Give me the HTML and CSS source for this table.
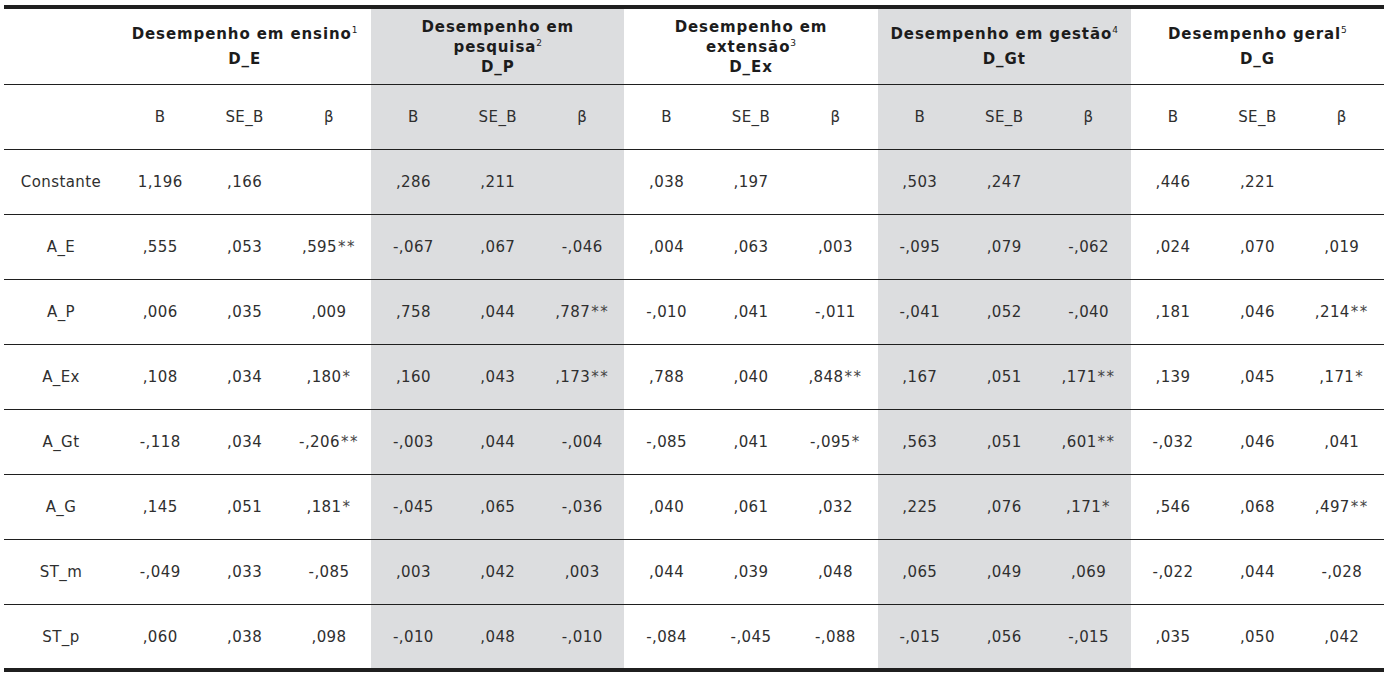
FILE: index.html
```html
<!DOCTYPE html>
<html lang="pt">
<head>
<meta charset="utf-8">
<title>Tabela de regressão</title>
<link rel="stylesheet" href="styles.css">
</head>
<body>
<table class="reg">
  <colgroup>
    <col class="c-label">
    <col span="15" class="c-num">
  </colgroup>
  <thead>
    <tr class="h1">
      <th></th>
      <th colspan="3" class="two">Desempenho em ensino<sup>1</sup><br>D_E</th>
      <th colspan="3" class="g three">Desempenho em<br>pesquisa<sup>2</sup><br>D_P</th>
      <th colspan="3" class="three">Desempenho em<br>extensão<sup>3</sup><br>D_Ex</th>
      <th colspan="3" class="g two">Desempenho em gestão<sup>4</sup><br>D_Gt</th>
      <th colspan="3" class="two">Desempenho geral<sup>5</sup><br>D_G</th>
    </tr>
    <tr class="h2">
      <th></th>
      <th>B</th><th>SE_B</th><th>β</th>
      <th class="g">B</th><th class="g">SE_B</th><th class="g">β</th>
      <th>B</th><th>SE_B</th><th>β</th>
      <th class="g">B</th><th class="g">SE_B</th><th class="g">β</th>
      <th>B</th><th>SE_B</th><th>β</th>
    </tr>
  </thead>
  <tbody>
    <tr>
      <td>Constante</td>
      <td>1,196</td><td>,166</td><td></td>
      <td class="g">,286</td><td class="g">,211</td><td class="g"></td>
      <td>,038</td><td>,197</td><td></td>
      <td class="g">,503</td><td class="g">,247</td><td class="g"></td>
      <td>,446</td><td>,221</td><td></td>
    </tr>
    <tr>
      <td>A_E</td>
      <td>,555</td><td>,053</td><td>,595<span class="st">**</span></td>
      <td class="g">-,067</td><td class="g">,067</td><td class="g">-,046</td>
      <td>,004</td><td>,063</td><td>,003</td>
      <td class="g">-,095</td><td class="g">,079</td><td class="g">-,062</td>
      <td>,024</td><td>,070</td><td>,019</td>
    </tr>
    <tr>
      <td>A_P</td>
      <td>,006</td><td>,035</td><td>,009</td>
      <td class="g">,758</td><td class="g">,044</td><td class="g">,787<span class="st">**</span></td>
      <td>-,010</td><td>,041</td><td>-,011</td>
      <td class="g">-,041</td><td class="g">,052</td><td class="g">-,040</td>
      <td>,181</td><td>,046</td><td>,214<span class="st">**</span></td>
    </tr>
    <tr>
      <td>A_Ex</td>
      <td>,108</td><td>,034</td><td>,180<span class="st">*</span></td>
      <td class="g">,160</td><td class="g">,043</td><td class="g">,173<span class="st">**</span></td>
      <td>,788</td><td>,040</td><td>,848<span class="st">**</span></td>
      <td class="g">,167</td><td class="g">,051</td><td class="g">,171<span class="st">**</span></td>
      <td>,139</td><td>,045</td><td>,171<span class="st">*</span></td>
    </tr>
    <tr>
      <td>A_Gt</td>
      <td>-,118</td><td>,034</td><td>-,206<span class="st">**</span></td>
      <td class="g">-,003</td><td class="g">,044</td><td class="g">-,004</td>
      <td>-,085</td><td>,041</td><td>-,095<span class="st">*</span></td>
      <td class="g">,563</td><td class="g">,051</td><td class="g">,601<span class="st">**</span></td>
      <td>-,032</td><td>,046</td><td>,041</td>
    </tr>
    <tr>
      <td>A_G</td>
      <td>,145</td><td>,051</td><td>,181<span class="st">*</span></td>
      <td class="g">-,045</td><td class="g">,065</td><td class="g">-,036</td>
      <td>,040</td><td>,061</td><td>,032</td>
      <td class="g">,225</td><td class="g">,076</td><td class="g">,171<span class="st">*</span></td>
      <td>,546</td><td>,068</td><td>,497<span class="st">**</span></td>
    </tr>
    <tr>
      <td>ST_m</td>
      <td>-,049</td><td>,033</td><td>-,085</td>
      <td class="g">,003</td><td class="g">,042</td><td class="g">,003</td>
      <td>,044</td><td>,039</td><td>,048</td>
      <td class="g">,065</td><td class="g">,049</td><td class="g">,069</td>
      <td>-,022</td><td>,044</td><td>-,028</td>
    </tr>
    <tr class="last">
      <td>ST_p</td>
      <td>,060</td><td>,038</td><td>,098</td>
      <td class="g">-,010</td><td class="g">,048</td><td class="g">-,010</td>
      <td>-,084</td><td>-,045</td><td>-,088</td>
      <td class="g">-,015</td><td class="g">,056</td><td class="g">-,015</td>
      <td>,035</td><td>,050</td><td>,042</td>
    </tr>
  </tbody>
</table>
</body>
</html>
```
FILE: styles.css
```css
html, body {
  margin: 0;
  padding: 0;
  background: #ffffff;
}
body {
  padding: 5px 4px 0 4px;
  font-family: "DejaVu Sans", Verdana, sans-serif;
  color: #2f2f2f;
}
.reg {
  width: 1380px;
  table-layout: fixed;
  border-collapse: separate;
  border-spacing: 0;
  border-top: 4px solid #1f1f1f;
  border-bottom: 4px solid #1f1f1f;
  font-size: 15px;
  letter-spacing: 0.4px;
}
.c-label { width: 114px; }
.c-num { width: 84.4px; }
.reg th, .reg td {
  padding: 0;
  text-align: center;
  vertical-align: middle;
  border-bottom: 1px solid #1f1f1f;
  font-weight: normal;
}
.reg tbody tr.last td { border-bottom: none; }
.reg .g { background: #dcdddf; }
.st {
  letter-spacing: 1.5px;
  color: #444;
  margin-left: 1px;
}
.h1 th {
  height: 75px;
  font-weight: bold;
  color: #1c1c1c;
  letter-spacing: 0.9px;
}
.h1 th.two { line-height: 25px; }
.h1 th.three { line-height: 20px; }
.h1 sup {
  font-size: 9px;
  line-height: 0;
  vertical-align: 6px;
  font-weight: normal;
  letter-spacing: 0;
}
.h2 th { height: 64px; }
.reg tbody td { height: 64px; }
.reg tbody tr.last td { height: 63px; }
```
